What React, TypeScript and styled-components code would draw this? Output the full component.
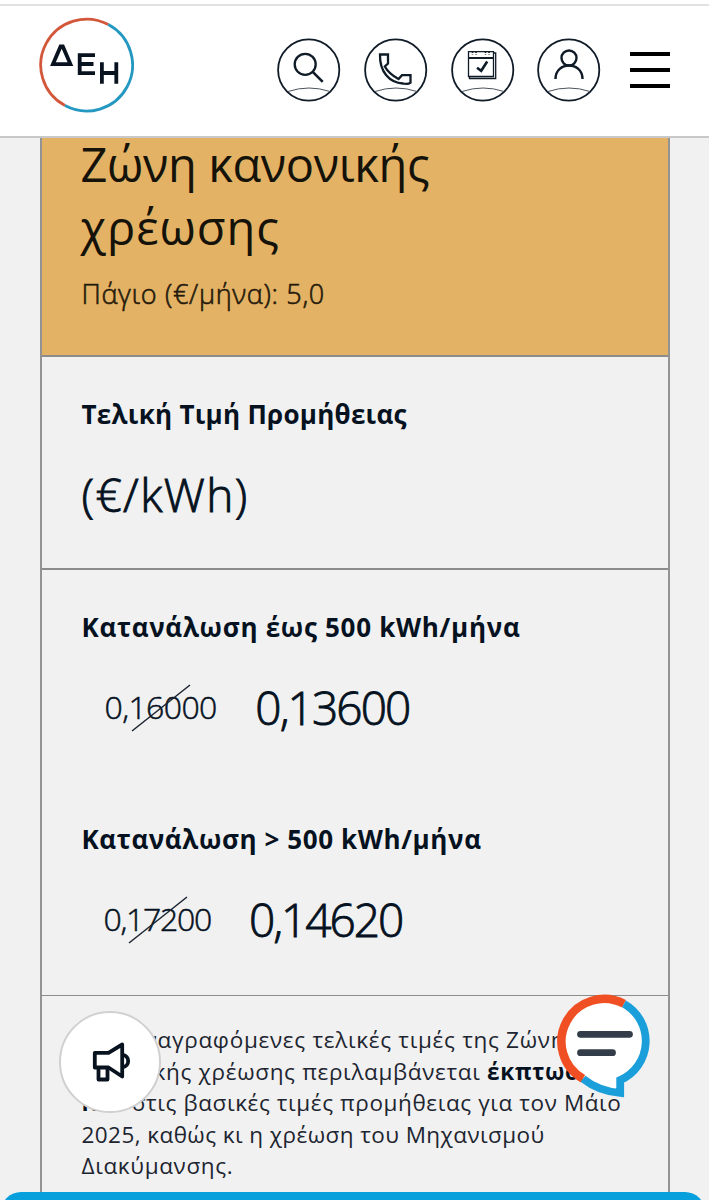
import React from "react";
import styled, { createGlobalStyle } from "styled-components";

const GlobalStyle = createGlobalStyle`
  * { box-sizing: border-box; }
  html, body { margin: 0; height: 100%; overflow: hidden; }
  body { background: #f1f1f2; color: #06121f; font-family: "Open Sans", "Noto Sans", sans-serif; }
`;

const Screen = styled.div`
  position: relative;
  height: 1200px;
  overflow: hidden;
  display: flex;
  flex-direction: column;
`;

const Header = styled.header`
  flex: none;
  height: 138px;
  padding: 0 39px;
  border-bottom: 2px solid #c9c9c9;
  background: linear-gradient(#fff 4px, #e2e2e2 4px, #e2e2e2 6px, #fff 6px);
  display: flex;
  justify-content: space-between;
`;

const Logo = styled.svg`
  width: 96px;
  height: 96px;
  margin-top: 17px;
  margin-left: -1px;
`;

const Actions = styled.nav`
  display: flex;
  align-items: center;
  height: 64px;
  margin-top: 38px;
  gap: 22.7px;
`;

const ActionButton = styled.button`
  width: 64px;
  height: 64px;
  padding: 0;
  border: 0;
  background: none;
  svg { display: block; width: 64px; height: 64px; }
`;

const MenuButton = styled.button`
  width: 40px;
  height: 36px;
  margin-left: 6px;
  padding: 0;
  border: 0;
  background: none;
  display: flex;
  flex-direction: column;
  justify-content: space-between;
`;

const MenuBar = styled.span`
  width: 100%;
  height: 4px;
  background: #000;
`;

const Content = styled.main`
  flex: 1;
  min-height: 0;
  overflow: hidden;
  padding: 0 39.5px;
`;

const Card = styled.article`
  height: 1100px;
  border: 2px solid #939393;
  border-top: 0;
  border-bottom: 0;
  background: #f1f1f1;
`;

const Section = styled.section<{ $h: number; $top: number; $tone?: string; $line?: number }>`
  display: flow-root;
  height: ${p => p.$h}px;
  padding: ${p => p.$top}px 0 0 40px;
  border-bottom: ${p => p.$line ?? 2}px solid #8c8c8c;
  background: ${p => p.$tone ?? "transparent"};
`;

const Line = styled.span<{ $ls?: number; $shift?: number }>`
  display: block;
  width: max-content;
  white-space: nowrap;
  letter-spacing: ${p => p.$ls ?? 0}px;
  margin-left: ${p => p.$shift ?? 0}px;
`;

const Title = styled.h2`
  margin: -5px 0 0 -1px;
  font-size: 47px;
  line-height: 63px;
  font-weight: 400;
  color: #15120a;
`;

const Fee = styled.p`
  margin: 15px 0 0;
  font-size: 27px;
  line-height: 40px;
  font-weight: 300;
  color: #241a0c;
  -webkit-text-stroke: 0.6px currentColor;
`;

const Label = styled.h3`
  margin: 0;
  font-size: 26px;
  line-height: 36px;
  font-weight: 700;
`;

const Unit = styled.p`
  margin: 32px 0 0;
  font-size: 46px;
  line-height: 60px;
  font-weight: 300;
  -webkit-text-stroke: 0.9px currentColor;
`;

const Prices = styled.div<{ $gap: number; $after: number; $indent: number }>`
  display: flex;
  align-items: center;
  gap: ${p => p.$gap}px;
  height: 60px;
  margin: 32px 0 ${p => p.$after}px ${p => p.$indent}px;
`;

const OldPrice = styled.s`
  position: relative;
  font-size: 32px;
  line-height: 60px;
  font-weight: 300;
  text-decoration: none;
  -webkit-text-stroke: 0.5px currentColor;
`;

const Strike = styled.svg<{ $x: number }>`
  position: absolute;
  left: ${p => p.$x}px;
  top: 7px;
  width: 60px;
  height: 48px;
`;

const NewPrice = styled.strong`
  font-size: 46px;
  line-height: 60px;
  font-weight: 300;
  -webkit-text-stroke: 0.9px currentColor;
`;

const Note = styled.p`
  margin: 0;
  font-size: 22.5px;
  line-height: 31.6px;
  font-weight: 400;
  color: #1d2530;
  b { font-weight: 700; color: #06121f; }
`;

const Announce = styled.button`
  position: absolute;
  left: 59px;
  top: 1011px;
  width: 102px;
  height: 102px;
  padding: 0;
  border: 2px solid #d0d0d0;
  border-radius: 50%;
  background: #fff;
  svg { display: block; width: 98px; height: 98px; }
`;

const Chat = styled.button`
  position: absolute;
  left: 554px;
  top: 992px;
  width: 98px;
  height: 108px;
  padding: 0;
  border: 0;
  background: none;
  svg { display: block; }
`;

const BottomBar = styled.div`
  position: absolute;
  left: 1px;
  right: 4px;
  top: 1192px;
  height: 40px;
  border-radius: 20px;
  background: #079fdc;
`;

function RoundIcon({ label, children }: { label: string; children: React.ReactNode }) {
  return (
    <ActionButton aria-label={label}>
      <svg viewBox="0 0 64 64" fill="none" stroke="#101b28">
        <circle cx="31.700" cy="32" r="30.6" strokeWidth="1.8" />
        <path d="M11 53.5Q32 46.5 53 53.5" strokeWidth="1" stroke="#4c535c" />
        {children}
      </svg>
    </ActionButton>
  );
}

function StrikeLine({ x }: { x: number }) {
  return (
    <Strike $x={x} viewBox="0 0 60 48">
      <path d="M1 47L59 1" stroke="#1b2430" strokeWidth="1.5" />
    </Strike>
  );
}

export default function App() {
  return (
    <Screen>
      <GlobalStyle />
      <Header>
        <Logo viewBox="0 0 96 96" fill="none" aria-label="ΔΕΗ">
          <path d="M27 88.600A45.900 45.900 0 0 1 70.300 7.600" stroke="#d3573a" strokeWidth="2.800" />
          <path d="M70.300 7.600A45.900 45.900 0 0 1 27 88.600" stroke="#2498c0" strokeWidth="2.800" />
          <g stroke="#08131f" strokeWidth="3.800">
            <path d="M15 47.100L22.600 29.400H24.800L32.400 47.100Z" />
            <path d="M57 38.200H41.700V56.100H57M41.700 47H55.500" />
            <path d="M63.900 45.300V66.800M78.300 45.300V66.800M63.900 56H78.300" />
          </g>
        </Logo>
        <Actions>
          <RoundIcon label="Αναζήτηση">
            <circle cx="28.200" cy="26.300" r="10.500" strokeWidth="2.300" />
            <path d="M35.500 33.700L45.700 43.800" strokeWidth="2.600" />
          </RoundIcon>
          <RoundIcon label="Τηλέφωνο">
            <path d="M16 16.500H24V25.500L20.800 28.500C23.500 33.500 28 37.500 34.500 41L38 37.200H46.500V44.700C45 46 42 46.200 39 45.500C25.500 44.500 15.500 34 16 16.500Z" strokeWidth="2.300" />
          </RoundIcon>
          <RoundIcon label="Ραντεβού">
            <path d="M17.500 13.700H42.500V38.500H17.500ZM18.500 39V40.500H44.700V15H42.500" strokeWidth="1.300" />
            <path d="M17.500 20H42.500" strokeWidth="2" />
            <path d="M21.500 13V16.500M25 13V16.500M34.500 13V16.500M38 13V16.500" strokeWidth="1.600" strokeDasharray="2 1" />
            <path d="M26 29.800L30.200 32.800L36.200 23.500" strokeWidth="2.600" />
          </RoundIcon>
          <RoundIcon label="Λογαριασμός">
            <circle cx="32" cy="20" r="7.500" strokeWidth="2.400" />
            <path d="M18.500 41C18.500 23 45.500 23 45.500 41" strokeWidth="2.400" />
          </RoundIcon>
          <MenuButton aria-label="Μενού"><MenuBar /><MenuBar /><MenuBar /></MenuButton>
        </Actions>
      </Header>

      <Content>
        <Card>
          <Section $h={218.5} $top={0} $tone="#e4b264">
            <Title><Line $ls={-0.4}>Ζώνη κανονικής</Line><Line $ls={0.9}>χρέωσης</Line></Title>
            <Fee><Line $ls={0.68}>Πάγιο (€/μήνα): 5,0</Line></Fee>
          </Section>
          <Section $h={213.5} $top={39}>
            <Label><Line $ls={0.27}>Τελική Τιμή Προμήθειας</Line></Label>
            <Unit><Line $ls={1.4}>(€/kWh)</Line></Unit>
          </Section>
          <Section $h={425.5} $top={39} $line={1.4}>
            <Label><Line $ls={0.7}>Κατανάλωση έως 500 kWh/μήνα</Line></Label>
            <Prices $gap={38.5} $after={84} $indent={23}>
              <OldPrice><Line $ls={-0.6}>0,16000</Line><StrikeLine x={26} /></OldPrice>
              <NewPrice><Line $ls={-1.9}>0,13600</Line></NewPrice>
            </Prices>
            <Label><Line $ls={0.6}>Κατανάλωση &gt; 500 kWh/μήνα</Line></Label>
            <Prices $gap={38} $after={0} $indent={22}>
              <OldPrice><Line $ls={-1.3}>0,17200</Line><StrikeLine x={24} /></OldPrice>
              <NewPrice><Line $ls={-2}>0,14620</Line></NewPrice>
            </Prices>
          </Section>
          <Section $h={250} $top={28.5}>
            <Note>
              <Line $ls={0.7} $shift={-2.5}>Στις αναγραφόμενες τελικές τιμές της Ζώνης</Line>
              <Line $ls={0.67} $shift={-3}>κανονικής χρέωσης περιλαμβάνεται <b>έκπτωση</b></Line>
              <Line $ls={0.6} $shift={-4}><b>15%</b> στις βασικές τιμές προμήθειας για τον Μάιο</Line>
              <Line $ls={0.43}>2025, καθώς κι η χρέωση του Μηχανισμού</Line>
              <Line $ls={0.64}>Διακύμανσης.</Line>
            </Note>
          </Section>
        </Card>
      </Content>

      <Announce aria-label="Ανακοινώσεις">
        <svg viewBox="0 0 98 98" fill="none" stroke="#08131f" strokeWidth="3.8" strokeLinejoin="round">
          <path d="M33.800 39.800H47.500L61.200 31.500V63.500L47.500 54.500H33.800Z" />
          <path d="M37.500 55V66.500H46.500V55" />
          <path d="M62 41.800A6.300 6.300 0 0 1 62 54.200" />
        </svg>
      </Announce>
      <Chat aria-label="Συνομιλία">
        <svg width="98" height="108" viewBox="0 0 98 108" fill="none">
          <path d="M29 86.700A42.700 42.700 0 1 1 66.200 88.100V100.700C52 99.500 40 95.500 29 86.700Z" fill="#fff" />
          <path d="M29 86.700A42.700 42.700 0 0 1 70 11.800" stroke="#f04e23" strokeWidth="8.500" />
          <path d="M70 11.800A42.700 42.700 0 0 1 66.200 88.100V100.900C52 99.700 40 95.500 29 86.700" stroke="#1a9fda" strokeWidth="7.800" />
          <path d="M26.500 42.300H75.500M26.500 60.700H58.500" stroke="#333d49" strokeWidth="6.800" strokeLinecap="round" />
        </svg>
      </Chat>
      <BottomBar />
    </Screen>
  );
}
